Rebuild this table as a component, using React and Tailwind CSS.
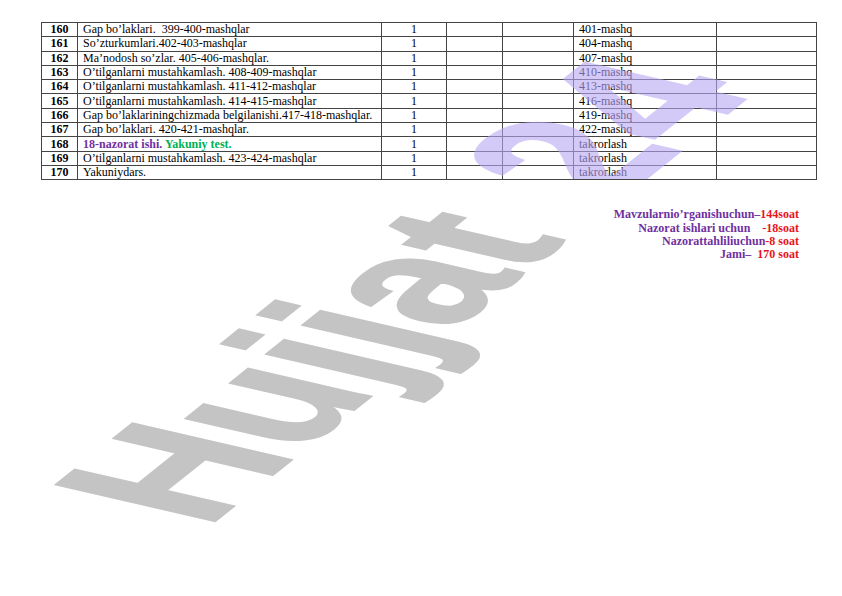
import React from "react";

const rows = [
    { n: 160, text: "Gap bo’laklari.  399-400-mashqlar", hw: "401-mashq" },
    { n: 161, text: "So’zturkumlari.402-403-mashqlar", hw: "404-mashq" },
    { n: 162, text: "Ma’nodosh so’zlar. 405-406-mashqlar.", hw: "407-mashq" },
    { n: 163, text: "O’tilganlarni mustahkamlash. 408-409-mashqlar", hw: "410-mashq" },
    { n: 164, text: "O’tilganlarni mustahkamlash. 411-412-mashqlar", hw: "413-mashq" },
    { n: 165, text: "O’tilganlarni mustahkamlash. 414-415-mashqlar", hw: "416-mashq" },
    { n: 166, text: "Gap bo’laklariningchizmada belgilanishi.417-418-mashqlar.", hw: "419-mashq" },
    { n: 167, text: "Gap bo’laklari. 420-421-mashqlar.", hw: "422-mashq" },
    { n: 168, text: null, hw: "takrorlash" },
    { n: 169, text: "O’tilganlarni mustahkamlash. 423-424-mashqlar", hw: "takrorlash" },
    { n: 170, text: "Yakuniydars.", hw: "takrorlash" },
];

const cell = "border border-[#444] p-0 h-[14.3px] align-middle";

function Watermark() {
    return (
        <svg className="absolute inset-0 pointer-events-none" width="842" height="596" viewBox="0 0 842 596">
            <defs>
                <clipPath id="tableClip">
                    <rect x="41" y="22" width="775" height="157" />
                </clipPath>
            </defs>
            {/* gray "Hujjat" */}
            <text
                transform="matrix(1.30 -1.04 2.30 0.53 206 528)"
                fontFamily="'Liberation Sans', Arial, sans-serif"
                fontWeight="700"
                fontSize="100"
                fill="#c4c4c4"
                stroke="#c4c4c4"
                strokeWidth="1.5"
            >
                Hujjat
            </text>
            {/* purple "24", only shows over the table */}
            <g clipPath="url(#tableClip)">
                <text
                    transform="matrix(1.30 -1.04 2.30 0.53 612 205)"
                    fontFamily="'Liberation Sans', Arial, sans-serif"
                    fontWeight="700"
                    fontSize="100"
                    fill="#b9a7f5"
                    stroke="#b9a7f5"
                    strokeWidth="2"
                    opacity="0.6"
                >
                    24
                </text>
            </g>
        </svg>
    );
}

export default function App() {
    return (
        <div className="relative w-[842px] h-[596px] bg-white overflow-hidden font-['Liberation_Serif',serif] text-black">
            <div className="pt-[22px] pl-[41px]">
                <table className="border-collapse table-fixed w-[775px] text-[12px] leading-[13px]">
                    <colgroup>
                        <col className="w-[36px]" />
                        <col className="w-[304px]" />
                        <col className="w-[65px]" />
                        <col className="w-[56px]" />
                        <col className="w-[71px]" />
                        <col className="w-[143px]" />
                        <col className="w-[100px]" />
                    </colgroup>
                    <tbody>
                        {rows.map((r) => (
                            <tr key={r.n}>
                                <td className={cell + " text-center font-bold"}>{r.n}</td>
                                <td className={cell + " pl-[5px] whitespace-pre"}>
                                    {r.text ? (
                                        r.text
                                    ) : (
                                        <span className="font-bold">
                                            <span className="text-[#7030a0]">18-nazorat ishi. </span>
                                            <span className="text-[#00b050]">Yakuniy test.</span>
                                        </span>
                                    )}
                                </td>
                                <td className={cell + " text-center"}>1</td>
                                <td className={cell}></td>
                                <td className={cell}></td>
                                <td className={cell + " pl-[5px]"}>{r.hw}</td>
                                <td className={cell}></td>
                            </tr>
                        ))}
                    </tbody>
                </table>
            </div>

            {/* totals */}
            <div className="mt-[28px] pr-[43px] flex flex-col items-end font-bold text-[12px] leading-[13.3px] whitespace-pre">
                <p>
                    <span className="text-[#7030a0]">Mavzularnio’rganishuchun–</span>
                    <span className="text-[#e8141c]">144soat</span>
                </p>
                <p>
                    <span className="text-[#7030a0]">Nazorat ishlari uchun    </span>
                    <span className="text-[#e8141c]">-18soat</span>
                </p>
                <p>
                    <span className="text-[#7030a0]">Nazorattahliliuchun</span>
                    <span className="text-[#e8141c]">-8 soat</span>
                </p>
                <p>
                    <span className="text-[#7030a0]">Jami–  </span>
                    <span className="text-[#e8141c]">170 soat</span>
                </p>
            </div>

            <Watermark />
        </div>
    );
}
